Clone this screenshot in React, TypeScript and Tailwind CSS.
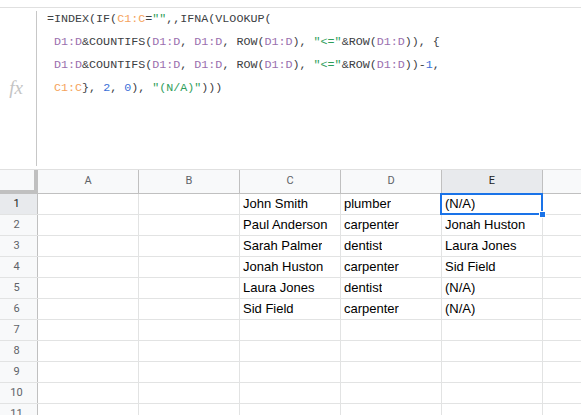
import React from 'react';

const columns = ['A', 'B', 'C', 'D', 'E'];

const rows: string[][] = [
  ['', '', 'John Smith', 'plumber', '(N/A)'],
  ['', '', 'Paul Anderson', 'carpenter', 'Jonah Huston'],
  ['', '', 'Sarah Palmer', 'dentist', 'Laura Jones'],
  ['', '', 'Jonah Huston', 'carpenter', 'Sid Field'],
  ['', '', 'Laura Jones', 'dentist', '(N/A)'],
  ['', '', 'Sid Field', 'carpenter', '(N/A)'],
  ['', '', '', '', ''],
  ['', '', '', '', ''],
  ['', '', '', '', ''],
  ['', '', '', '', ''],
  ['', '', '', '', ''],
];

const Rng = ({ c, children }: { c: 'o' | 'p'; children: React.ReactNode }) => (
  <span className={c === 'o' ? 'text-[#f5a35c]' : 'text-[#9a6fae]'}>{children}</span>
);
const Str = ({ children }: { children: React.ReactNode }) => (
  <span className="text-[#2f9e5b]">{children}</span>
);
const Num = ({ children }: { children: React.ReactNode }) => (
  <span className="text-[#3b6fd8]">{children}</span>
);

function FormulaBar() {
  return (
    <div className="mt-[7px] flex h-[163px] border-y border-[#e0e0e0]">
      <div className="flex w-[36px] items-center justify-center pr-[4px]">
        <span className="text-[19px] italic text-[#c4c4c4]" style={{ fontFamily: '"Liberation Serif", serif' }}>
          fx
        </span>
      </div>
      <div className="my-[3px] w-px bg-[#c7c7c7]" />
      <div
        className="whitespace-pre pl-[10px] text-[11.7px] leading-[23px] text-[#3c4043]"
        style={{ fontFamily: '"Liberation Mono", monospace' }}
      >
        <div>
          =INDEX(IF(<Rng c="o">C1:C</Rng>=<Str>""</Str>,,IFNA(VLOOKUP(
        </div>
        <div>
          {' '}<Rng c="p">D1:D</Rng>&COUNTIFS(<Rng c="p">D1:D</Rng>, <Rng c="p">D1:D</Rng>, ROW(<Rng c="p">D1:D</Rng>), <Str>"&lt;="</Str>&ROW(<Rng c="p">D1:D</Rng>)), {'{'}
        </div>
        <div>
          {' '}<Rng c="p">D1:D</Rng>&COUNTIFS(<Rng c="p">D1:D</Rng>, <Rng c="p">D1:D</Rng>, ROW(<Rng c="p">D1:D</Rng>), <Str>"&lt;="</Str>&ROW(<Rng c="p">D1:D</Rng>))-<Num>1</Num>,
        </div>
        <div>
          {' '}<Rng c="o">C1:C</Rng>{'}'}, <Num>2</Num>, <Num>0</Num>), <Str>"(N/A)"</Str>)))
        </div>
      </div>
    </div>
  );
}

function Grid() {
  return (
    <div className="text-[13px] text-black" style={{ fontFamily: '"Liberation Sans", Arial, sans-serif' }}>
      {/* header row */}
      <div className="flex h-[24px] border-b border-[#c0c0c0] bg-[#f8f9fa]">
        <div className="h-[24px] w-[38px] shrink-0 border-r-4 border-b-4 border-[#c0c0c0]" />
        {columns.map((col) => (
          <div
            key={col}
            className={`flex w-[101px] shrink-0 items-center justify-center border-r border-[#c0c0c0] text-[11px] ${
              col === 'E' ? 'bg-[#e8eaed] text-[#202124]' : 'text-[#5f6368]'
            }`}
            style={{ fontFamily: 'Roboto, Arial, sans-serif' }}
          >
            {col}
          </div>
        ))}
        <div className="flex-1" />
      </div>

      {rows.map((row, i) => (
        <div key={i} className="flex h-[21px] border-b border-[#e2e3e3]">
          <div
            className={`flex w-[38px] shrink-0 items-center justify-center border-r border-[#c0c0c0] pr-[4px] text-[11px] ${
              i === 0 ? 'bg-[#e8eaed] text-[#202124]' : 'bg-[#f8f9fa] text-[#5f6368]'
            }`}
            style={{ fontFamily: 'Roboto, Arial, sans-serif' }}
          >
            {i + 1}
          </div>
          {row.map((val, j) => (
            <div
              key={j}
              className="relative flex w-[101px] shrink-0 items-center border-r border-[#e2e3e3] px-[3px]"
            >
              <span className="truncate">{val}</span>
              {i === 0 && j === 4 && (
                <>
                  <div className="absolute -left-[2px] -top-[1px] z-10 h-[22px] w-[103px] border-2 border-[#1a73e8]" />
                  <div className="absolute -bottom-[4px] -right-[4px] z-20 h-[7px] w-[7px] border border-white bg-[#1a73e8]" />
                </>
              )}
            </div>
          ))}
          <div className="flex-1" />
        </div>
      ))}
    </div>
  );
}

export default function App() {
  return (
    <div className="h-[415px] w-[581px] overflow-hidden bg-white">
      <FormulaBar />
      <Grid />
    </div>
  );
}
